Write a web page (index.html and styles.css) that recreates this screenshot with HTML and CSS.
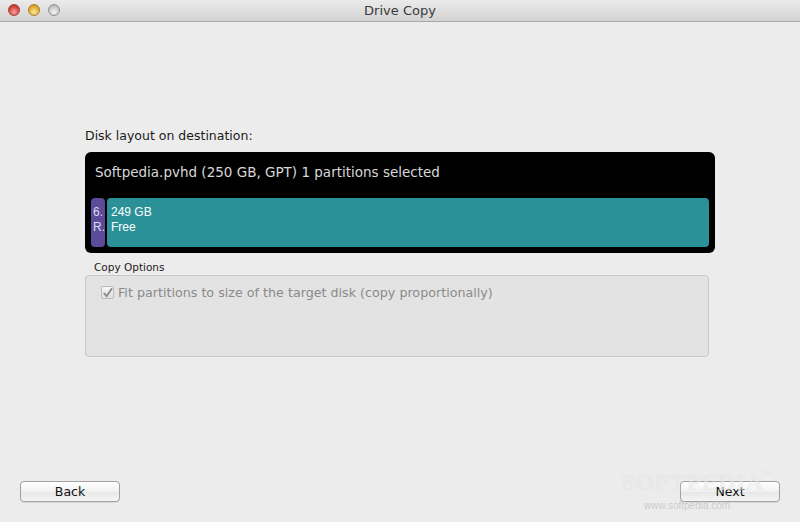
FILE: index.html
```html
<!DOCTYPE html>
<html>
<head>
<meta charset="utf-8">
<link rel="stylesheet" href="styles.css">
</head>
<body>
<div class="window">
  <div class="titlebar">
    <div class="lights">
      <span class="light red"></span>
      <span class="light yellow"></span>
      <span class="light gray"></span>
    </div>
    <div class="title">Drive Copy</div>
  </div>
  <div class="content">
    <div class="label">Disk layout on destination:</div>
    <div class="disk">
      <div class="disk-title">Softpedia.pvhd (250 GB, GPT) 1 partitions selected</div>
      <div class="parts">
        <div class="part small">6.<br>R.</div>
        <div class="part free">249 GB<br>Free</div>
      </div>
    </div>
    <div class="group-label">Copy Options</div>
    <div class="group">
      <label class="check">
        <span class="box">
          <svg width="12" height="12" viewBox="0 0 12 12"><path d="M2.5 6.5 L5 9.5 L10.5 1.5" fill="none" stroke="#8a8a8a" stroke-width="2" stroke-linecap="round" stroke-linejoin="round"/></svg>
        </span>
        <span class="check-text">Fit partitions to size of the target disk (copy proportionally)</span>
      </label>
    </div>
    <div class="spacer"></div>
    <div class="buttons">
      <button class="btn">Back</button>
      <button class="btn">Next</button>
    </div>
    <div class="watermark">SOFTPEDIA<span class="tm">™</span><div class="wm-url">www.softpedia.com</div></div>
  </div>
</div>
</body>
</html>
```

FILE: styles.css
```css
html, body {
  margin: 0;
  padding: 0;
}
body {
  width: 800px;
  height: 522px;
  overflow: hidden;
  font-family: "DejaVu Sans", sans-serif;
  background: #ececec;
}
.window {
  width: 800px;
  height: 522px;
  display: flex;
  flex-direction: column;
  background: #ececec;
}
.titlebar {
  height: 22px;
  flex: none;
  position: relative;
  background: linear-gradient(#ebebeb, #d2d2d2);
  border-bottom: 1px solid #a8a8a8;
  box-sizing: border-box;
  display: flex;
  align-items: center;
  justify-content: center;
}
.lights {
  position: absolute;
  left: 8px;
  top: 4px;
  display: flex;
  gap: 8px;
}
.light {
  width: 12px;
  height: 12px;
  border-radius: 50%;
  box-sizing: border-box;
}
.light.red {
  background: radial-gradient(circle at 50% 70%, #f6a3a0, #d2453e 60%, #a5221c);
  border: 1px solid #a8403a;
}
.light.yellow {
  background: radial-gradient(circle at 50% 70%, #fbe5a0, #e0ad33 60%, #b07d18);
  border: 1px solid #a8812e;
}
.light.gray {
  background: radial-gradient(circle at 50% 70%, #f5f5f5, #c8c8c8 60%, #a6a6a6);
  border: 1px solid #939393;
}
.title {
  font-size: 13px;
  color: #3a3a3a;
}
.content {
  flex: 1;
  position: relative;
  padding: 106px 85px 20px 85px;
  display: flex;
  flex-direction: column;
}
.label {
  font-size: 12.5px;
  color: #1a1a1a;
  height: 24px;
}
.disk {
  width: 630px;
  height: 101px;
  background: #000;
  border-radius: 6px;
  box-sizing: border-box;
  padding: 12px 6px 6px 6px;
}
.disk-title {
  color: #d8d8d8;
  font-size: 13.5px;
  padding-left: 4px;
  height: 34px;
}
.parts {
  display: flex;
  gap: 2px;
  height: 49px;
}
.part {
  border-radius: 4px;
  font-family: "Liberation Sans", sans-serif;
  font-size: 12px;
  line-height: 15px;
  color: #fff;
  box-sizing: border-box;
  padding-top: 7px;
}
.part.small {
  width: 14px;
  background: #5b4b98;
  padding-left: 2px;
  overflow: hidden;
  color: #dcdcf2;
}
.part.free {
  flex: 1;
  background: #2a9199;
  padding-left: 4px;
}
.group-label {
  font-size: 10.5px;
  color: #222;
  padding: 8px 0 0 9px;
  height: 14px;
}
.group {
  width: 624px;
  height: 82px;
  box-sizing: border-box;
  background: #e3e3e3;
  border: 1px solid #c9c9c9;
  border-radius: 4px;
  padding: 9px 0 0 15px;
}
.check {
  display: flex;
  align-items: center;
  gap: 4px;
}
.box {
  width: 13px;
  height: 13px;
  box-sizing: border-box;
  border: 1px solid #bcbcbc;
  border-radius: 2px;
  background: linear-gradient(#f6f6f6, #e0e0e0);
  display: flex;
  align-items: center;
  justify-content: center;
}
.check-text {
  font-size: 12.7px;
  color: #8a8a8a;
}
.spacer {
  flex: 1;
}
.buttons {
  display: flex;
  justify-content: space-between;
  margin: 0 -65px;
}
.btn {
  width: 100px;
  height: 21px;
  border: 1px solid #a0a0a0;
  border-radius: 4px;
  background: linear-gradient(#ffffff, #f1f1f1 50%, #e6e6e6 51%, #f6f6f6);
  font-family: "DejaVu Sans", sans-serif;
  font-size: 12.5px;
  color: #111;
  padding: 0;
  box-shadow: 0 1px 0 rgba(0,0,0,0.08);
}
.watermark {
  position: absolute;
  left: 622px;
  top: 448px;
  font-family: "Liberation Serif", serif;
  font-size: 24px;
  font-weight: bold;
  line-height: 24px;
  color: rgba(255,255,255,0.55);
  text-shadow: 0 0 1px rgba(0,0,0,0.12);
  letter-spacing: 0.5px;
  pointer-events: none;
}
.tm {
  font-size: 8px;
  vertical-align: top;
  line-height: 8px;
}
.wm-url {
  font-family: "Liberation Sans", sans-serif;
  font-weight: normal;
  font-size: 10px;
  line-height: 12px;
  color: rgba(195,195,195,0.8);
  text-shadow: none;
  margin: 6px 0 0 22px;
  letter-spacing: 0;
}
```
